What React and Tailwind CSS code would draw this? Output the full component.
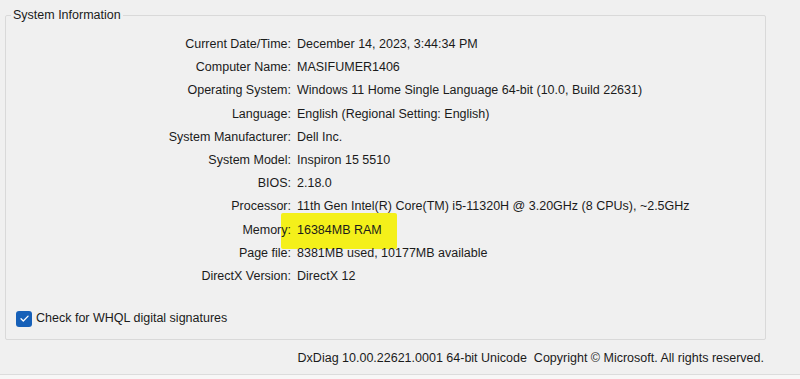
import React from "react";

const rows = [
    ["Current Date/Time:", "December 14, 2023, 3:44:34 PM"],
    ["Computer Name:", "MASIFUMER1406"],
    ["Operating System:", "Windows 11 Home Single Language 64-bit (10.0, Build 22631)"],
    ["Language:", "English (Regional Setting: English)"],
    ["System Manufacturer:", "Dell Inc."],
    ["System Model:", "Inspiron 15 5510"],
    ["BIOS:", "2.18.0"],
    ["Processor:", "11th Gen Intel(R) Core(TM) i5-11320H @ 3.20GHz (8 CPUs), ~2.5GHz"],
    ["Memory:", "16384MB RAM"],
    ["Page file:", "8381MB used, 10177MB available"],
    ["DirectX Version:", "DirectX 12"],
];

export default function App() {
    return (
        <div
            className="relative w-[800px] h-[379px] overflow-hidden bg-[#f0f0f0] text-[12.5px] text-[#1b1b1b]"
            style={{ fontFamily: '"Liberation Sans", Arial, sans-serif' }}
        >
            <div className="pt-[6px] pl-[5px]">
                {/* System information group */}
                <fieldset className="w-[761px] h-[334px] border border-[#d9d9d9] rounded-[2px]">
                    <legend className="ml-[5px] px-[2px] leading-[18px]">System Information</legend>

                    <div className="relative mt-[9px]">
                        {/* highlighter mark */}
                        <div className="absolute left-[275px] top-[180px] w-[116px] h-[36px] bg-[#f4f01a] rounded-[2px]" />

                        <div className="relative grid grid-cols-[285px_1fr] gap-x-[6px]">
                            {rows.map(([label, value]) => (
                                <React.Fragment key={label}>
                                    <div className="text-right leading-[23.2px] whitespace-nowrap">{label}</div>
                                    <div className="leading-[23.2px] whitespace-nowrap">{value}</div>
                                </React.Fragment>
                            ))}
                        </div>
                    </div>

                    <label className="flex items-center gap-[4px] mt-[21px] ml-[10px]">
                        <span className="flex items-center justify-center w-[16px] h-[16px] rounded-[3px] bg-[#1660b8]">
                            <svg width="11" height="11" viewBox="0 0 12 12" fill="none">
                                <path d="M2.2 6.3l2.5 2.5 5.2-5.4" stroke="#fff" strokeWidth="1.4" strokeLinecap="round" strokeLinejoin="round" />
                            </svg>
                        </span>
                        <span>Check for WHQL digital signatures</span>
                    </label>
                </fieldset>
            </div>

            {/* footer */}
            <div className="flex justify-end pr-[36px] mt-[10px] leading-[16px] whitespace-pre">
                DxDiag 10.00.22621.0001 64-bit Unicode  Copyright © Microsoft. All rights reserved.
            </div>

            <div className="absolute left-0 right-0 bottom-0 h-[5px] border-t border-[#dcdcdc] bg-[#f7f7f7]" />
        </div>
    );
}
